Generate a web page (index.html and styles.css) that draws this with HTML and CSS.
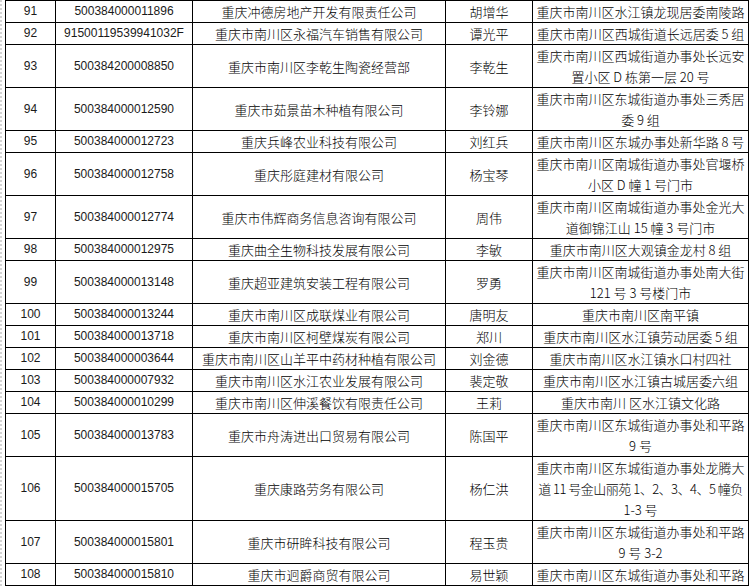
FILE: index.html
```html
<!DOCTYPE html>
<html lang="zh-CN">
<head>
<meta charset="utf-8">
<title>企业名录</title>
<link rel="stylesheet" href="styles.css">
</head>
<body>
<table class="sheet">
  <colgroup>
    <col class="c-no"><col class="c-code"><col class="c-name"><col class="c-person"><col class="c-addr">
  </colgroup>
  <tbody>
    <tr class="l1"><td class="num">91</td><td class="code">500384000011896</td><td class="name">重庆冲德房地产开发有限责任公司</td><td>胡增华</td><td class="addr">重庆市南川区水江镇龙现居委南陵路</td></tr>
    <tr class="l1"><td class="num">92</td><td class="code">91500119539941032F</td><td class="name">重庆市南川区永福汽车销售有限公司</td><td>谭光平</td><td class="addr">重庆市南川区西城街道长远居委 5 组</td></tr>
    <tr class="l2"><td class="num">93</td><td class="code">500384200008850</td><td class="name">重庆市南川区李乾生陶瓷经营部</td><td>李乾生</td><td class="addr">重庆市南川区西城街道办事处长远安<br>置小区 D 栋第一层 20 号</td></tr>
    <tr class="l2"><td class="num">94</td><td class="code">500384000012590</td><td class="name">重庆市茹景苗木种植有限公司</td><td>李铃娜</td><td class="addr">重庆市南川区东城街道办事处三秀居<br>委 9 组</td></tr>
    <tr class="l1s"><td class="num">95</td><td class="code">500384000012723</td><td class="name">重庆兵峰农业科技有限公司</td><td>刘红兵</td><td class="addr">重庆市南川区东城办事处新华路 8 号</td></tr>
    <tr class="l2"><td class="num">96</td><td class="code">500384000012758</td><td class="name">重庆彤庭建材有限公司</td><td>杨宝琴</td><td class="addr">重庆市南川区南城街道办事处官堰桥<br>小区 D 幢 1 号门市</td></tr>
    <tr class="l2"><td class="num">97</td><td class="code">500384000012774</td><td class="name">重庆市伟辉商务信息咨询有限公司</td><td>周伟</td><td class="addr">重庆市南川区南城街道办事处金光大<br>道御锦江山 15 幢 3 号门市</td></tr>
    <tr class="l1"><td class="num">98</td><td class="code">500384000012975</td><td class="name">重庆曲全生物科技发展有限公司</td><td>李敏</td><td class="addr">重庆市南川区大观镇金龙村 8 组</td></tr>
    <tr class="l2"><td class="num">99</td><td class="code">500384000013148</td><td class="name">重庆超亚建筑安装工程有限公司</td><td>罗勇</td><td class="addr">重庆市南川区南城街道办事处南大街<br>121 号 3 号楼门市</td></tr>
    <tr class="l1"><td class="num">100</td><td class="code">500384000013244</td><td class="name">重庆市南川区成联煤业有限公司</td><td>唐明友</td><td class="addr">重庆市南川区南平镇</td></tr>
    <tr class="l1"><td class="num">101</td><td class="code">500384000013718</td><td class="name">重庆市南川区柯壁煤炭有限公司</td><td>郑川</td><td class="addr">重庆市南川区水江镇劳动居委 5 组</td></tr>
    <tr class="l1"><td class="num">102</td><td class="code">500384000003644</td><td class="name">重庆市南川区山羊平中药材种植有限公司</td><td>刘金德</td><td class="addr">重庆市南川区水江镇水口村四社</td></tr>
    <tr class="l1"><td class="num">103</td><td class="code">500384000007932</td><td class="name">重庆市南川区水江农业发展有限公司</td><td>裴定敬</td><td class="addr">重庆市南川区水江镇古城居委六组</td></tr>
    <tr class="l1"><td class="num">104</td><td class="code">500384000010299</td><td class="name">重庆市南川区伸溪餐饮有限责任公司</td><td>王莉</td><td class="addr">重庆市南川 区水江镇文化路</td></tr>
    <tr class="l2"><td class="num">105</td><td class="code">500384000013783</td><td class="name">重庆市舟涛进出口贸易有限公司</td><td>陈国平</td><td class="addr">重庆市南川区东城街道办事处和平路<br>9 号</td></tr>
    <tr class="l3"><td class="num">106</td><td class="code">500384000015705</td><td class="name">重庆康路劳务有限公司</td><td>杨仁洪</td><td class="addr">重庆市南川区东城街道办事处龙腾大<br><span class="tight">道 11 号金山丽苑 1、2、3、4、5 幢负</span><br>1-3 号</td></tr>
    <tr class="l2"><td class="num">107</td><td class="code">500384000015801</td><td class="name">重庆市研眸科技有限公司</td><td>程玉贵</td><td class="addr">重庆市南川区东城街道办事处和平路<br>9 号 3-2</td></tr>
    <tr class="l1"><td class="num">108</td><td class="code">500384000015810</td><td class="name">重庆市迥爵商贸有限公司</td><td>易世颖</td><td class="addr">重庆市南川区东城街道办事处和平路</td></tr>
  </tbody>
</table>
</body>
</html>
```

FILE: styles.css
```css
html, body {
  margin: 0;
  padding: 0;
  background: #ffffff;
}

body {
  border-left: 2px dotted #d4d4d4;
}

.sheet {
  border-collapse: collapse;
  table-layout: fixed;
  width: 743px;
  margin: 0 0 0 3px;
  font-family: "Noto Sans CJK SC", "Noto Sans CJK TC", sans-serif;
  font-weight: 300;
  font-size: 13px;
  color: #000000;
}

.c-no { width: 50px; }
.c-code { width: 137px; }
.c-name { width: 253px; }
.c-person { width: 87px; }
.c-addr { width: 216px; }

.sheet td {
  border: 1px solid #000000;
  padding: 0 2px;
  text-align: center;
  vertical-align: middle;
  line-height: 21px;
  white-space: nowrap;
  overflow: hidden;
}

.sheet td.num,
.sheet td.code {
  font-family: "Liberation Sans", Arial, sans-serif;
  font-weight: 400;
  font-size: 12px;
  color: #1a1a1a;
}

.l1 { height: 22px; }
.l1s { height: 20px; }
.l2 { height: 43px; }
.l3 { height: 63px; }

.tight {
  letter-spacing: -0.5px;
}
```
